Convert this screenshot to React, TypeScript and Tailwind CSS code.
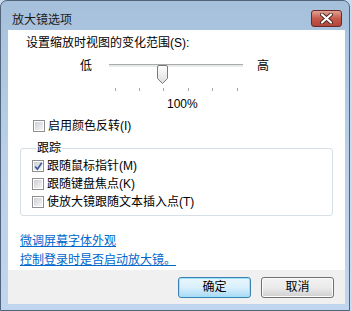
import React from "react"

function CheckBox({ checked }: { checked?: boolean }) {
  return (
    <span className="relative flex size-[12px] shrink-0 items-center justify-center border border-[#8f8f8f] bg-white">
      <span className="size-[8px] bg-gradient-to-br from-[#cbcfd5] to-[#f6f6f6]" />
      {checked && (
        <svg
          className="absolute left-[1px] top-[1px]"
          width="9"
          height="9"
          viewBox="0 0 9 9"
        >
          <path
            d="M1.2 4.5 L3.4 7.2 L7.8 0.8"
            fill="none"
            stroke="#3b5a9b"
            strokeWidth="1.7"
          />
        </svg>
      )}
    </span>
  )
}

function Option({ label, checked }: { label: string; checked?: boolean }) {
  return (
    <div className="flex h-[18px] items-center gap-[3px]">
      <CheckBox checked={checked} />
      <span>{label}</span>
    </div>
  )
}

function Slider() {
  const ticks = [6, 30, 54, 79, 103, 128]
  return (
    <div className="relative h-[30px] w-[134px]">
      <div className="mt-[8px] h-[3px] border-t border-[#a9a9a9] bg-[#e8ebeb]" />
      <svg
        className="absolute left-[48px] top-[1px]"
        width="11"
        height="19"
        viewBox="0 0 11 19"
      >
        <defs>
          <linearGradient id="thumb" x1="0" y1="0" x2="0" y2="1">
            <stop offset="0" stopColor="#ffffff" />
            <stop offset="1" stopColor="#dcdcdc" />
          </linearGradient>
        </defs>
        <path
          d="M2 0.5 H9 A1.5 1.5 0 0 1 10.5 2 V13.5 L5.5 18.5 L0.5 13.5 V2 A1.5 1.5 0 0 1 2 0.5 Z"
          fill="url(#thumb)"
          stroke="#7a7a7a"
        />
      </svg>
      {ticks.map((x) => (
        <span
          key={x}
          className="absolute top-[24px] h-[3px] w-px bg-[#a5a5a5]"
          style={{ left: x }}
        />
      ))}
    </div>
  )
}

export default function App() {
  return (
    <div className="h-[311px] w-[352px] bg-[#c9dcef] font-[Liberation_Sans,Noto_Sans_CJK_SC,sans-serif] text-[12px] leading-[16px] text-black">
      <div className="flex h-[311px] w-[350px] flex-col rounded-t-[7px] border border-[#52647a] bg-gradient-to-b from-[#a6c0dc] via-[#b9d0e8] to-[#bfd6ee] pb-[6px] pl-[7px] pr-[4px]">
        {/* title bar */}
        <div className="flex h-[29px] items-start justify-between">
          <span className="mt-[11px] pl-[4px] text-[#1b1b1b]">放大镜选项</span>
          <button
            type="button"
            className="mr-[3px] mt-[9px] flex h-[17px] w-[31px] items-center justify-center rounded-[3px] border border-[#6a2b28] bg-gradient-to-b from-[#e0a193] via-[#c65a4b] to-[#b0473a]"
          >
            <svg width="13" height="11" viewBox="0 0 13 11">
              <path
                d="M2 1.5 L11 9.5 M11 1.5 L2 9.5"
                stroke="#4a2522"
                strokeWidth="4"
                strokeLinecap="round"
              />
              <path
                d="M2 1.5 L11 9.5 M11 1.5 L2 9.5"
                stroke="#ffffff"
                strokeWidth="2.2"
                strokeLinecap="round"
              />
            </svg>
          </button>
        </div>

        {/* client area */}
        <div className="flex flex-1 flex-col">
          <div className="flex-1 bg-white">
            <div className="pl-[18px] pt-[5px]">设置缩放时视图的变化范围(S):</div>

            <div className="mt-[5px] flex items-start pl-[72px]">
              <span className="leading-[20px]">低</span>
              <div className="ml-[17px]">
                <Slider />
              </div>
              <span className="ml-[14px] leading-[20px]">高</span>
            </div>
            <div className="mt-[2px] pl-[159px]">100%</div>

            <div className="mt-[5px] pl-[25px]">
              <Option label="启用颜色反转(I)" />
            </div>

            <fieldset className="ml-[12px] mt-[5px] w-[313px] rounded-[3px] border border-[#d5dfe5] pb-[4px] pl-[11px]">
              <legend className="ml-[4px] px-[1px] leading-[16px]">跟踪</legend>
              <div className="mt-[1px]">
                <Option label="跟随鼠标指针(M)" checked />
                <Option label="跟随键盘焦点(K)" />
                <Option label="使放大镜跟随文本插入点(T)" />
              </div>
            </fieldset>

            <div className="ml-[12px] mt-[16px] flex flex-col items-start leading-[19px] text-[#0066cc]">
              <a href="#" className="underline">微调屏幕字体外观</a>
              <a href="#" className="underline">控制登录时是否启动放大镜。</a>
            </div>
          </div>

          <div className="flex h-[34px] items-center justify-end gap-[10px] bg-[#f0f0f0] pr-[11px]">
            <button
              type="button"
              className="flex h-[21px] w-[73px] items-center justify-center rounded-[3px] border border-[#3c7fb1] bg-gradient-to-b from-[#eaf6fd] via-[#d9f0fc] to-[#a7d9f5] shadow-[inset_0_0_0_1px_#9ee1fb]"
            >
              确定
            </button>
            <button
              type="button"
              className="flex h-[21px] w-[73px] items-center justify-center rounded-[3px] border border-[#707070] bg-gradient-to-b from-[#f2f2f2] via-[#ebebeb] to-[#cfcfcf] shadow-[inset_0_0_0_1px_#fcfcfc]"
            >
              取消
            </button>
          </div>
        </div>
      </div>
    </div>
  )
}
